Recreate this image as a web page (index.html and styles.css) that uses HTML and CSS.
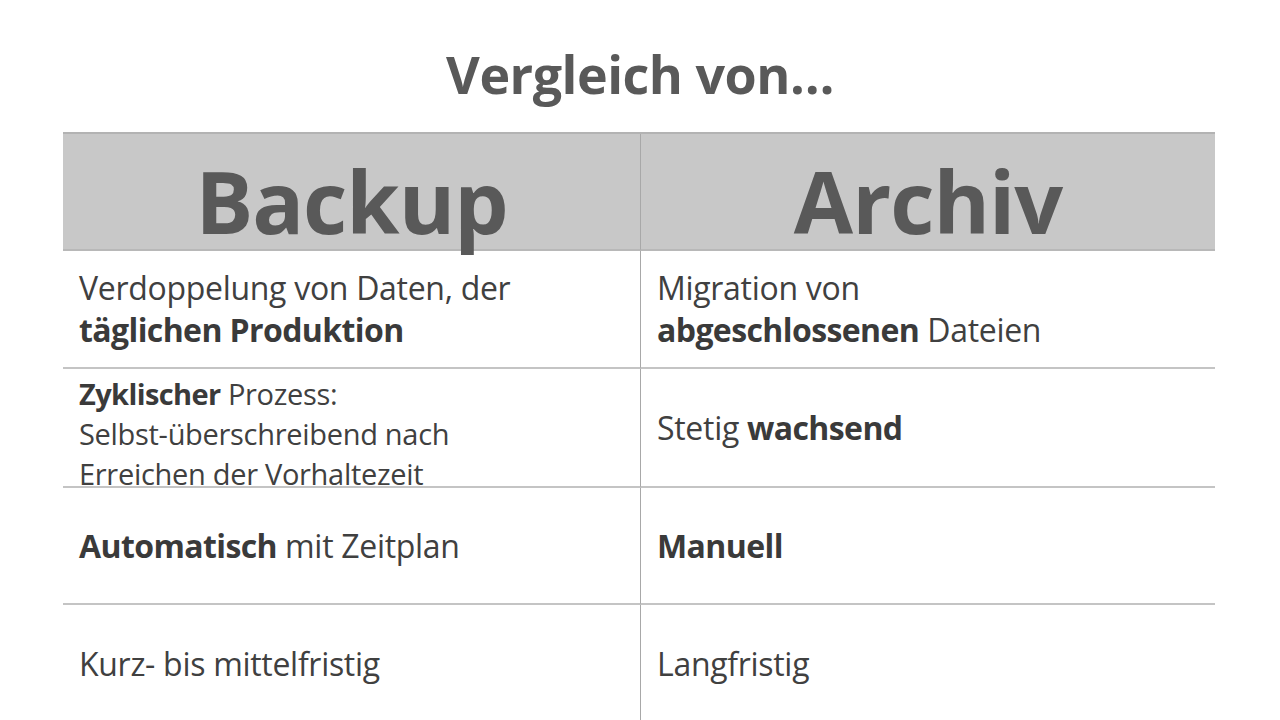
FILE: index.html
```html
<!DOCTYPE html>
<html lang="de">
<head>
<meta charset="utf-8">
<title>Vergleich von…</title>
<link rel="stylesheet" href="styles.css">
</head>
<body>
<div class="slide">
  <header class="title-bar">
    <h1 class="title">Vergleich von…</h1>
  </header>
  <div class="table">
    <div class="cell head left">Backup</div>
    <div class="cell head">Archiv</div>

    <div class="cell left"><p>Verdoppelung von Daten, der<br><b>täglichen Produktion</b></p></div>
    <div class="cell"><p>Migration von<br><b>abgeschlossenen</b> Dateien</p></div>

    <div class="cell left small"><p><b>Zyklischer</b> Prozess:<br>Selbst-überschreibend nach<br>Erreichen der Vorhaltezeit</p></div>
    <div class="cell"><p>Stetig <b>wachsend</b></p></div>

    <div class="cell left"><p><b>Automatisch</b> mit Zeitplan</p></div>
    <div class="cell"><p><b>Manuell</b></p></div>

    <div class="cell left last"><p>Kurz- bis mittelfristig</p></div>
    <div class="cell last"><p>Langfristig</p></div>
  </div>
</div>
</body>
</html>
```

FILE: styles.css
```css
html, body {
  margin: 0;
  padding: 0;
  background: #ffffff;
}

body {
  font-family: "Open Sans", "Lato", "Liberation Sans", sans-serif;
  color: #404040;
}

.slide {
  width: 1280px;
  height: 720px;
  overflow: hidden;
}

.title-bar {
  height: 132px;
  display: flex;
  align-items: center;
  justify-content: center;
}

.title {
  margin: 0;
  padding-top: 14px;
  font-size: 52px;
  font-weight: 700;
  color: #595959;
  letter-spacing: -0.5px;
}

.table {
  margin-left: 63px;
  width: 1152px;
  display: grid;
  grid-template-columns: 578px 574px;
  grid-template-rows: 117px 118px 119px 117px 117px;
  border-top: 2px solid #b3b3b3;
}

.cell {
  display: flex;
  align-items: center;
  padding-left: 16px;
  border-bottom: 2px solid #c4c4c4;
  box-sizing: border-box;
}

.cell.left {
  border-right: 1px solid #a8a8a8;
}

.cell.last {
  border-bottom: none;
}

.cell p {
  margin: 0;
  font-size: 32px;
  line-height: 42px;
  letter-spacing: -0.3px;
}

.cell.small p {
  font-size: 29px;
  line-height: 40px;
  letter-spacing: -0.3px;
  margin-top: 12px;
}

.cell b {
  font-weight: 700;
  color: #3a3a3a;
  letter-spacing: -0.6px;
}

.cell.head {
  background: #c8c8c8;
  justify-content: center;
  padding-left: 0;
  padding-top: 18px;
  font-size: 86px;
  font-weight: 700;
  color: #595959;
  letter-spacing: -1px;
  border-bottom: 2px solid #b8b8b8;
}
```
